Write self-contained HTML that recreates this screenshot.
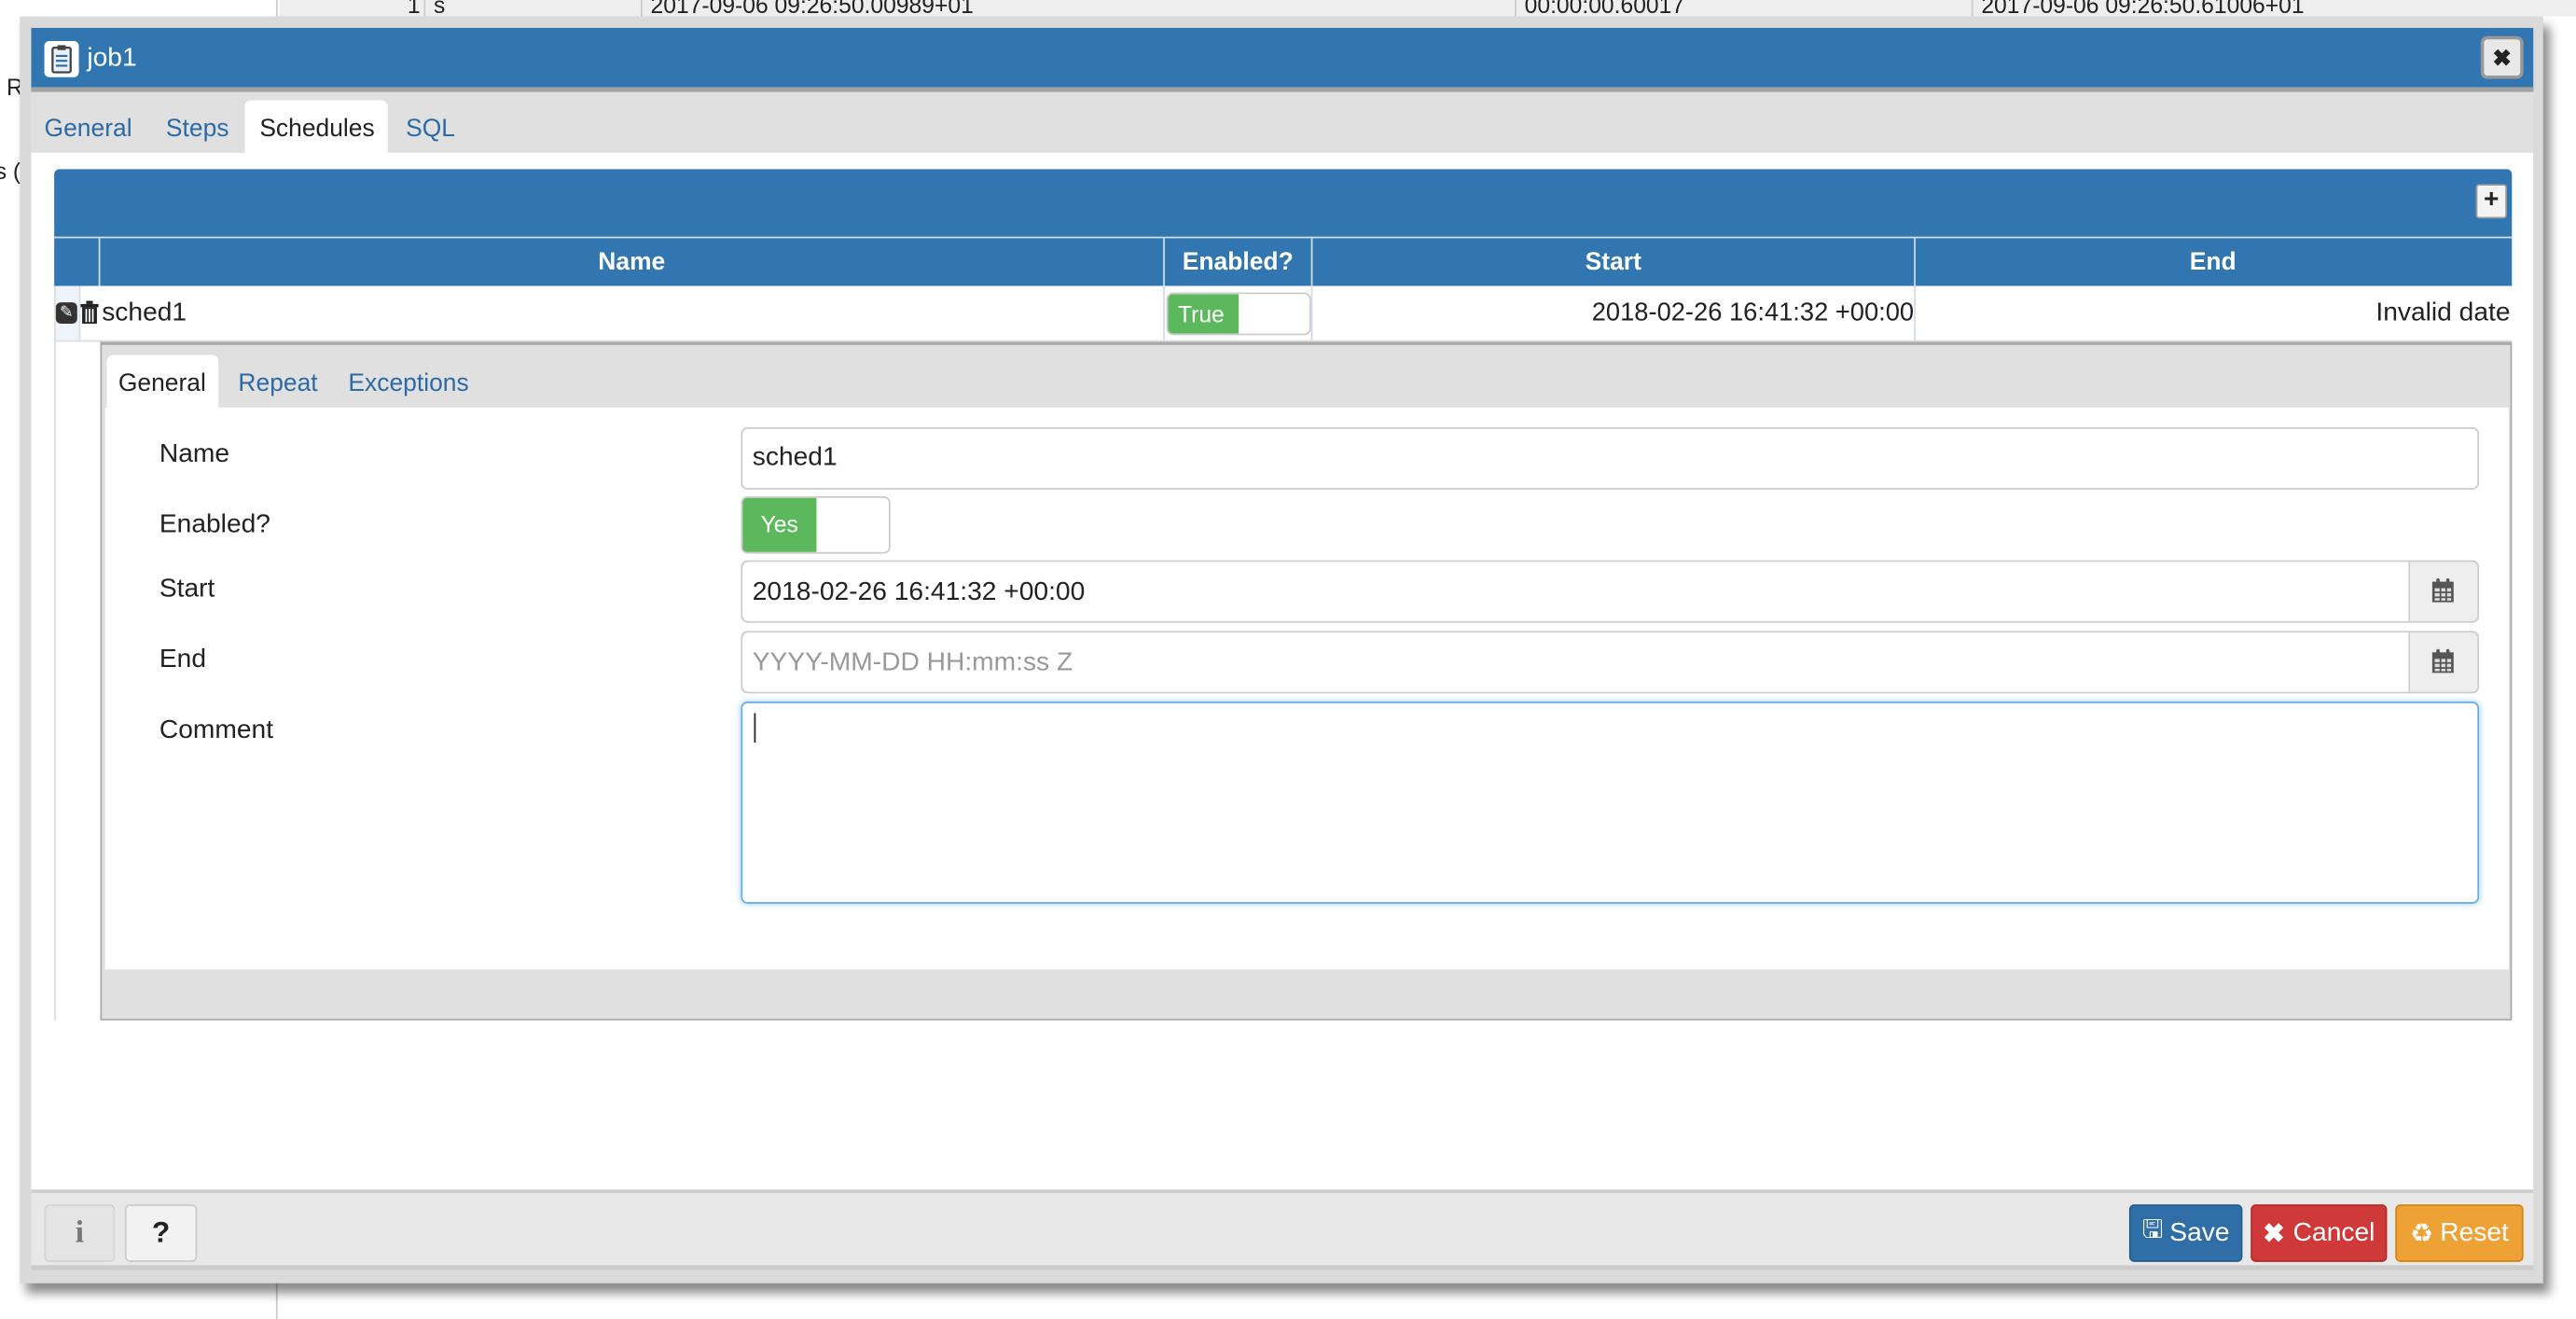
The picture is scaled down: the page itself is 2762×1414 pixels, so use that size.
<!DOCTYPE html>
<html><head><meta charset="utf-8"><style>
html,body{margin:0;padding:0;background:#fff;overflow:hidden;width:2762px;height:1414px}
#w{position:absolute;left:0;top:0;width:1568px;height:803px;transform:scale(1.76148);transform-origin:0 0;font-family:"Liberation Sans",sans-serif;font-size:15px;color:#222}
.a{position:absolute}
.t{white-space:nowrap}
.blue{color:#2c6aa6}
.btn{position:absolute;border-radius:3px;color:#fff;font-size:16px;display:flex;align-items:center;justify-content:center;box-sizing:border-box}
.inp{position:absolute;background:#fff;border:1px solid #ccc;border-radius:4px;box-sizing:border-box}
</style></head><body><div id="w">
<div class="a" style="left:170px;top:0;width:1398px;height:10px;background:#eee"></div>
<div class="a" style="left:168px;top:0;width:1px;height:803px;background:#ccc"></div>
<div class="a" style="left:258px;top:0;width:1px;height:10px;background:#ccc"></div>
<div class="a" style="left:390px;top:0;width:1px;height:10px;background:#ccc"></div>
<div class="a" style="left:922px;top:0;width:1px;height:10px;background:#ccc"></div>
<div class="a" style="left:1200px;top:0;width:1px;height:10px;background:#ccc"></div>
<div class="a t" style="left:248px;top:-5px;font-size:14px">1</div>
<div class="a t" style="left:264px;top:-5px;font-size:14px">s</div>
<div class="a t" style="left:396px;top:-5px;font-size:14px">2017-09-06 09:26:50.00989+01</div>
<div class="a t" style="left:928px;top:-5px;font-size:14px">00:00:00.60017</div>
<div class="a t" style="left:1206px;top:-5px;font-size:14px">2017-09-06 09:26:50.61006+01</div>
<div class="a t" style="left:4px;top:45px;font-size:14px">R</div>
<div class="a t" style="left:-3px;top:96px;font-size:14px">s (</div>
<div class="a" style="left:12px;top:10px;width:1536px;height:771px;background:#dadada;box-shadow:4px 6px 6px rgba(0,0,0,.45)"></div>
<div class="a" style="left:19px;top:17px;width:1523px;height:36px;background:#3276b1;border-bottom:3px solid #a3a3a3"></div>
<div class="a" style="left:27px;top:25px;width:21px;height:22px;background:#fff;border-radius:3px"></div>
<svg class="a" style="left:31px;top:27px" width="13" height="18" viewBox="0 0 13 18"><rect x="1" y="2" width="11" height="15" rx="1" fill="#e8f0f8" stroke="#444" stroke-width="1.3"/><rect x="4" y="0.5" width="5" height="3" fill="#444"/><g stroke="#2c6aa6" stroke-width="1.2"><line x1="3" y1="7" x2="10" y2="7"/><line x1="3" y1="10" x2="10" y2="10"/><line x1="3" y1="13" x2="10" y2="13"/></g></svg>
<div class="a t" style="left:53px;top:27px;color:#fff;font-size:16px">job1</div>
<div class="a" style="left:1510px;top:22px;width:26px;height:26px;background:#e8e8e8;border:2px solid #999;border-radius:4px;box-sizing:border-box;text-align:center;font-weight:bold;font-size:14px;line-height:22px">✖</div>
<div class="a" style="left:19px;top:56px;width:1523px;height:37px;background:#e0e0e0"></div>
<div class="a" style="left:149px;top:61px;width:87px;height:32px;background:#fff;border-radius:4px 4px 0 0"></div>
<div class="a t blue" style="left:27px;top:70px">General</div>
<div class="a t blue" style="left:101px;top:70px">Steps</div>
<div class="a t" style="left:158px;top:70px">Schedules</div>
<div class="a t blue" style="left:247px;top:70px">SQL</div>
<div class="a" style="left:19px;top:93px;width:1523px;height:631px;background:#fff"></div>
<div class="a" style="left:33px;top:103px;width:1496px;height:71px;background:#3276b1;border-radius:3px 3px 0 0"></div>
<div class="a" style="left:33px;top:144px;width:1496px;height:1px;background:#cfdde9"></div>
<div class="a" style="left:1507px;top:112px;width:19px;height:21px;background:#f4f4f4;border:1px solid #999;border-radius:2px;box-sizing:border-box;text-align:center;font-weight:bold;font-size:16px;line-height:18px">+</div>
<div class="a" style="left:60px;top:145px;width:1px;height:29px;background:#cfdde9"></div>
<div class="a" style="left:708px;top:145px;width:1px;height:63px;background:#cfdde9"></div>
<div class="a" style="left:798px;top:145px;width:1px;height:63px;background:#cfdde9"></div>
<div class="a" style="left:1165px;top:145px;width:1px;height:63px;background:#cfdde9"></div>
<div class="a t" style="left:61px;width:647px;top:151px;text-align:center;color:#fff;font-weight:bold;font-size:15px">Name</div>
<div class="a t" style="left:709px;width:89px;top:151px;text-align:center;color:#fff;font-weight:bold;font-size:15px">Enabled?</div>
<div class="a t" style="left:799px;width:366px;top:151px;text-align:center;color:#fff;font-weight:bold;font-size:15px">Start</div>
<div class="a t" style="left:1166px;width:362px;top:151px;text-align:center;color:#fff;font-weight:bold;font-size:15px">End</div>
<div class="a" style="left:33px;top:174px;width:15px;height:33px;background:#eef4fb"></div>
<div class="a" style="left:33px;top:207px;width:1496px;height:1px;background:#ddd"></div>
<div class="a" style="left:33px;top:174px;width:1px;height:447px;background:#ddd"></div>
<div class="a" style="left:48px;top:174px;width:1px;height:33px;background:#ddd"></div>
<div class="a" style="left:34px;top:184px;width:13px;height:13px;background:#333;border-radius:3px;color:#fff;font-size:10px;line-height:13px;text-align:center">✎</div>
<svg class="a" style="left:49px;top:183px" width="11" height="14" viewBox="0 0 11 14"><rect x="0" y="2" width="11" height="2" fill="#222"/><rect x="3.5" y="0" width="4" height="2" fill="#222"/><rect x="1" y="4" width="9" height="10" fill="#222"/><g stroke="#fff" stroke-width="1"><line x1="3.5" y1="5" x2="3.5" y2="13"/><line x1="5.5" y1="5" x2="5.5" y2="13"/><line x1="7.5" y1="5" x2="7.5" y2="13"/></g></svg>
<div class="a t" style="left:62px;top:182px;font-size:16px">sched1</div>
<div class="a" style="left:710px;top:178px;width:88px;height:26px;border:1px solid #ccc;border-radius:4px;box-sizing:border-box;background:#fff;overflow:hidden"><div style="width:43px;height:100%;background:#5cb85c;color:#fff;font-size:14px;line-height:24px;padding-left:6px;box-sizing:border-box">True</div></div>
<div class="a t" style="right:403px;top:182px;font-size:15.5px">2018-02-26 16:41:32 +00:00</div>
<div class="a t" style="right:40px;top:182px;font-size:16px">Invalid date</div>
<div class="a" style="left:61px;top:208px;width:1468px;height:413px;background:#e0e0e0;border:1px solid #aaa;border-top:2px solid #aaa;box-sizing:border-box"></div>
<div class="a" style="left:65px;top:216px;width:68px;height:32px;background:#fff;border-radius:4px 4px 0 0"></div>
<div class="a t" style="left:72px;top:225px">General</div>
<div class="a t blue" style="left:145px;top:225px">Repeat</div>
<div class="a t blue" style="left:212px;top:225px">Exceptions</div>
<div class="a" style="left:64px;top:248px;width:1463px;height:342px;background:#fff"></div>
<div class="a t" style="left:97px;top:268px;font-size:16px">Name</div>
<div class="a t" style="left:97px;top:311px;font-size:16px">Enabled?</div>
<div class="a t" style="left:97px;top:350px;font-size:16px">Start</div>
<div class="a t" style="left:97px;top:393px;font-size:16px">End</div>
<div class="a t" style="left:97px;top:436px;font-size:16px">Comment</div>
<div class="inp" style="left:451px;top:260px;width:1058px;height:38px"></div>
<div class="a t" style="left:458px;top:270px;font-size:16px">sched1</div>
<div class="a" style="left:451px;top:302px;width:91px;height:35px;border:1px solid #ccc;border-radius:4px;box-sizing:border-box;background:#fff;overflow:hidden"><div style="width:45px;height:100%;background:#5cb85c;color:#fff;font-size:14px;line-height:33px;padding-left:11px;box-sizing:border-box">Yes</div></div>
<div class="inp" style="left:451px;top:341px;width:1058px;height:38px;background:#eee"><div style="position:absolute;left:0;top:0;width:1014px;height:36px;background:#fff;border-right:1px solid #ccc;border-radius:4px 0 0 4px"></div></div>
<div class="a t" style="left:458px;top:352px;font-size:16px">2018-02-26 16:41:32 +00:00</div>
<div class="inp" style="left:451px;top:384px;width:1058px;height:38px;background:#eee"><div style="position:absolute;left:0;top:0;width:1014px;height:36px;background:#fff;border-right:1px solid #ccc;border-radius:4px 0 0 4px"></div></div>
<div class="a t" style="left:458px;top:395px;font-size:16px;color:#999">YYYY-MM-DD HH:mm:ss Z</div>
<svg class="a" style="left:1480px;top:352px" width="14" height="15" viewBox="0 0 14 15"><rect x="0.5" y="2" width="13" height="12.5" fill="#555"/><rect x="3" y="0" width="2" height="4" rx="1" fill="#555"/><rect x="9" y="0" width="2" height="4" rx="1" fill="#555"/><g fill="#ddd"><rect x="2" y="6" width="3" height="2"/><rect x="6" y="6" width="2.5" height="2"/><rect x="9.5" y="6" width="2.5" height="2"/><rect x="2" y="9" width="3" height="2"/><rect x="6" y="9" width="2.5" height="2"/><rect x="9.5" y="9" width="2.5" height="2"/><rect x="2" y="12" width="3" height="1.5"/><rect x="6" y="12" width="2.5" height="1.5"/><rect x="9.5" y="12" width="2.5" height="1.5"/></g></svg>
<svg class="a" style="left:1480px;top:395px" width="14" height="15" viewBox="0 0 14 15"><rect x="0.5" y="2" width="13" height="12.5" fill="#555"/><rect x="3" y="0" width="2" height="4" rx="1" fill="#555"/><rect x="9" y="0" width="2" height="4" rx="1" fill="#555"/><g fill="#ddd"><rect x="2" y="6" width="3" height="2"/><rect x="6" y="6" width="2.5" height="2"/><rect x="9.5" y="6" width="2.5" height="2"/><rect x="2" y="9" width="3" height="2"/><rect x="6" y="9" width="2.5" height="2"/><rect x="9.5" y="9" width="2.5" height="2"/><rect x="2" y="12" width="3" height="1.5"/><rect x="6" y="12" width="2.5" height="1.5"/><rect x="9.5" y="12" width="2.5" height="1.5"/></g></svg>
<div class="inp" style="left:451px;top:427px;width:1058px;height:123px;border-color:#66afe9;box-shadow:0 0 4px rgba(102,175,233,.6)"></div>
<div class="a" style="left:459px;top:434px;width:1px;height:18px;background:#222"></div>
<div class="a" style="left:19px;top:724px;width:1523px;height:2px;background:#ccc"></div>
<div class="a" style="left:19px;top:726px;width:1523px;height:44px;background:#e8e8e8"></div>
<div class="a" style="left:19px;top:770px;width:1523px;height:3px;background:#ccc"></div>
<div class="btn" style="left:27px;top:733px;width:43px;height:35px;background:#e4e4e4;border:1px solid #d4d4d4;color:#777;font-weight:bold;font-family:'Liberation Serif',serif;font-size:19px">i</div>
<div class="btn" style="left:76px;top:733px;width:44px;height:35px;background:#f2f2f2;border:1px solid #ccc;color:#222;font-weight:bold;font-size:18px">?</div>
<div class="btn" style="left:1296px;top:733px;width:69px;height:35px;background:#2f6ea6;border:1px solid #285e8e"><span style="font-size:15px;margin-right:4px">🖫</span>Save</div>
<div class="btn" style="left:1370px;top:733px;width:83px;height:35px;background:#d0393a;border:1px solid #b52b27"><span style="font-weight:bold;margin-right:5px">✖</span>Cancel</div>
<div class="btn" style="left:1458px;top:733px;width:78px;height:35px;background:#eea236;border:1px solid #d58512"><span style="margin-right:4px">♻</span>Reset</div>
</div></body></html>
